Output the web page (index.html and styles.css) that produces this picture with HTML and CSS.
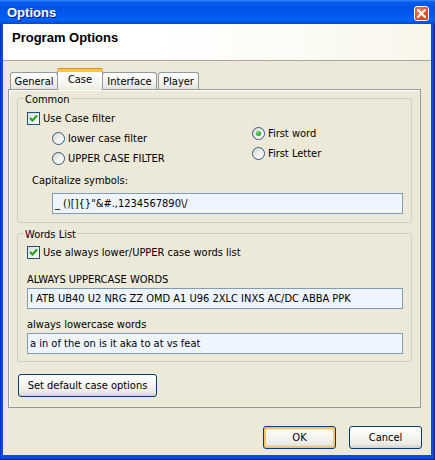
FILE: index.html
```html
<!DOCTYPE html>
<html>
<head>
<meta charset="utf-8">
<link rel="stylesheet" href="styles.css">
</head>
<body>
<div class="window">
  <div class="titlebar">
    <span class="title">Options</span>
    <span class="close"><svg width="9" height="9" viewBox="0 0 9 9"><path d="M1 1 L8 8 M8 1 L1 8" stroke="#fff" stroke-width="2" stroke-linecap="square"/></svg></span>
  </div>
  <div class="client">
    <div class="header">Program Options</div>
    <div class="body">
      <div class="tabs">
        <div class="tab t-general">General</div>
        <div class="tab active t-case">Case</div>
        <div class="tab t-interface">Interface</div>
        <div class="tab t-player">Player</div>
      </div>
      <div class="panel">
        <fieldset class="group common">
          <legend>Common</legend>
          <div class="filter-row">
            <div class="col-left">
              <div class="opt check"><span class="box"><svg width="11" height="11" viewBox="0 0 11 11"><path d="M2 5 L4.5 7.5 L9 2.5" fill="none" stroke="#21A121" stroke-width="2.2"/></svg></span>Use Case filter</div>
              <div class="sub">
                <div class="opt radio"><span class="ring"></span>lower case filter</div>
                <div class="opt radio"><span class="ring"></span>UPPER CASE FILTER</div>
              </div>
            </div>
            <div class="col-right">
              <div class="opt radio"><span class="ring on"><span class="dot"></span></span>First word</div>
              <div class="opt radio"><span class="ring"></span>First Letter</div>
            </div>
          </div>
          <div class="caption cap-sym">Capitalize symbols:</div>
          <div class="edit edit-sym">_ ()[]{}"&amp;#.,1234567890\/</div>
        </fieldset>
        <fieldset class="group words">
          <legend>Words List</legend>
          <div class="opt check"><span class="box"><svg width="11" height="11" viewBox="0 0 11 11"><path d="M2 5 L4.5 7.5 L9 2.5" fill="none" stroke="#21A121" stroke-width="2.2"/></svg></span>Use always lower/UPPER case words list</div>
          <div class="caption cap-upper">ALWAYS UPPERCASE WORDS</div>
          <div class="edit">I ATB UB40 U2 NRG ZZ OMD A1 U96 2XLC INXS AC/DC ABBA PPK</div>
          <div class="caption cap-lower">always lowercase words</div>
          <div class="edit">a in of the on is it aka to at vs feat</div>
        </fieldset>
        <button class="btn btn-default-opts">Set default case options</button>
      </div>
      <div class="footer">
        <button class="btn btn-ok">OK</button>
        <button class="btn btn-cancel">Cancel</button>
      </div>
    </div>
  </div>
</div>
</body>
</html>
```
FILE: styles.css
```css
html, body {
  margin: 0;
  padding: 0;
}
body {
  width: 435px;
  height: 460px;
  overflow: hidden;
  font-family: "DejaVu Sans Condensed", "DejaVu Sans", sans-serif;
  font-stretch: condensed;
  font-size: 11px;
  color: #000;
}
.window {
  box-sizing: border-box;
  width: 435px;
  height: 460px;
  display: flex;
  flex-direction: column;
  background: #0A4BDD;
  padding: 0 4px 5px 3px;
  box-shadow: inset 1px 0 0 #0831D9, inset -1px 0 0 #001EA0, inset 0 -1px 0 #001EA0;
}
.titlebar {
  height: 24px;
  margin: 0 -4px 0 -3px;
  display: flex;
  align-items: center;
  justify-content: space-between;
  padding: 0 6px 0 7px;
  background: linear-gradient(#3C8CF7 0, #0A5CEF 2px, #0054E3 7px, #0058EE 14px, #0563F5 20px, #0050DE 23px, #0A44D0 24px);
}
.title {
  font-family: "Liberation Sans", Arial, sans-serif;
  font-weight: bold;
  font-size: 13px;
  color: #fff;
  text-shadow: 1px 1px 0 #0A1883;
  margin-top: 1px;
}
.close {
  box-sizing: border-box;
  width: 15px;
  height: 15px;
  margin-top: 2px;
  border: 1px solid #fff;
  border-radius: 3px;
  background: radial-gradient(circle at 35% 30%, #F08A6A 0, #E2552F 45%, #C93D1B 100%);
  display: flex;
  align-items: center;
  justify-content: center;
}
.client {
  flex: 1;
  display: flex;
  flex-direction: column;
  background: #ECE9D8;
}
.header {
  height: 30px;
  padding: 6px 0 0 9px;
  font-family: "Liberation Sans", Arial, sans-serif;
  font-weight: bold;
  font-size: 13px;
  line-height: 16px;
  background: linear-gradient(to right, #FFFFFF 35%, #F8F6EA 100%);
  border-bottom: 1px solid #ACA899;
}
.body {
  flex: 1;
  display: flex;
  flex-direction: column;
  padding: 8px 10px 0 5px;
}
.tabs {
  display: flex;
  align-items: flex-end;
  height: 20px;
  margin-left: 2px;
  position: relative;
  z-index: 1;
}
.tab {
  box-sizing: border-box;
  height: 17px;
  border: 1px solid #919B9C;
  border-bottom: none;
  border-radius: 3px 3px 0 0;
  background: linear-gradient(#FFFFFF, #F3F2EC 60%, #E6E4DB);
  text-align: center;
  line-height: 15px;
  padding-top: 1px;
}
.t-general { width: 48px; }
.t-case { width: 46px; }
.t-interface { width: 55px; margin-left: -1px; }
.t-player { width: 41px; margin-left: 1px; }
.tab.active {
  height: 21px;
  margin-bottom: -1px;
  margin-left: -1px;
  border-top: 3px solid #FFC83C;
  box-shadow: 0 -1px 0 #E68B2C;
  background: linear-gradient(#FFFFFF, #F6F5F0 70%, #ECE9D8);
  line-height: 13px;
  padding-top: 1px;
  border-radius: 2px 2px 0 0;
}
.panel {
  box-sizing: border-box;
  height: 319px;
  border: 1px solid #919B9C;
  box-shadow: inset 1px 1px 0 #FFFFFF;
  padding: 1px 8px 0 8px;
  display: flex;
  flex-direction: column;
  align-items: flex-start;
}
.group {
  align-self: stretch;
  margin: 0;
  border: 1px solid #D0D0BF;
  border-radius: 3px;
  padding: 0;
  min-width: 0;
}
.group legend {
  padding: 3px 1px 0 1px;
  margin-left: 6px;
  line-height: 12px;
}
.common {
  padding-top: 4px;
  padding-bottom: 8px;
}
.words {
  margin-top: 3px;
  padding-top: 3px;
  padding-bottom: 7px;
}
.filter-row {
  display: flex;
  padding-left: 9px;
}
.col-left {
  width: 225px;
  display: flex;
  flex-direction: column;
}
.sub {
  display: flex;
  flex-direction: column;
  gap: 4px;
  margin-top: 4px;
  padding-left: 25px;
}
.col-right {
  display: flex;
  flex-direction: column;
  gap: 4px;
  padding-top: 15px;
}
.opt {
  display: flex;
  align-items: center;
  height: 16px;
  white-space: nowrap;
}
.words > .opt {
  padding-left: 9px;
}
.box {
  box-sizing: border-box;
  width: 13px;
  height: 13px;
  border: 1px solid #1C5180;
  background: linear-gradient(135deg, #DCDCD7 0%, #F5F5F2 70%, #FFFFFF 100%);
  margin-right: 3px;
  display: flex;
  align-items: center;
  justify-content: center;
}
.ring {
  box-sizing: border-box;
  width: 13px;
  height: 13px;
  border-radius: 50%;
  border: 1px solid #2F5A86;
  background: linear-gradient(135deg, #D6D6D0 0%, #F3F3EF 60%, #FFFFFF 100%);
  margin-right: 3px;
  display: flex;
  align-items: center;
  justify-content: center;
}
.dot {
  width: 5px;
  height: 5px;
  border-radius: 50%;
  background: radial-gradient(circle at 40% 35%, #7BE07B 0, #2DB32D 50%, #178F17 100%);
}
.caption {
  height: 14px;
  line-height: 14px;
  white-space: nowrap;
}
.cap-sym {
  margin: 8px 0 0 14px;
}
.cap-upper {
  margin: 13px 0 0 9px;
}
.cap-lower {
  margin: 9px 0 0 9px;
}
.edit {
  box-sizing: border-box;
  height: 21px;
  line-height: 19px;
  border: 1px solid #7F9DB9;
  background: #EEF5FF;
  padding-left: 2px;
  margin: 1px 8px 0 9px;
  white-space: nowrap;
  overflow: hidden;
}
.edit-sym {
  margin: 5px 8px 0 34px;
}
.btn {
  box-sizing: border-box;
  font-family: inherit;
  font-stretch: condensed;
  font-size: 11px;
  color: #000;
  height: 23px;
  border: 1px solid #003C74;
  border-radius: 3px;
  background: linear-gradient(#FFFFFF 0%, #F6F6F3 40%, #ECEBE6 80%, #D6D0C5 100%);
  padding: 0;
}
.btn-default-opts {
  width: 139px;
  margin: 12px 0 0 1px;
}
.footer {
  display: flex;
  justify-content: flex-end;
  gap: 13px;
  margin: 18px -1px 0 0;
}
.btn-ok, .btn-cancel {
  width: 73px;
}
.btn-ok {
  box-shadow: inset 0 0 0 2px #F8C266, inset 0 1px 0 2px #FFE6AE;
}
```
